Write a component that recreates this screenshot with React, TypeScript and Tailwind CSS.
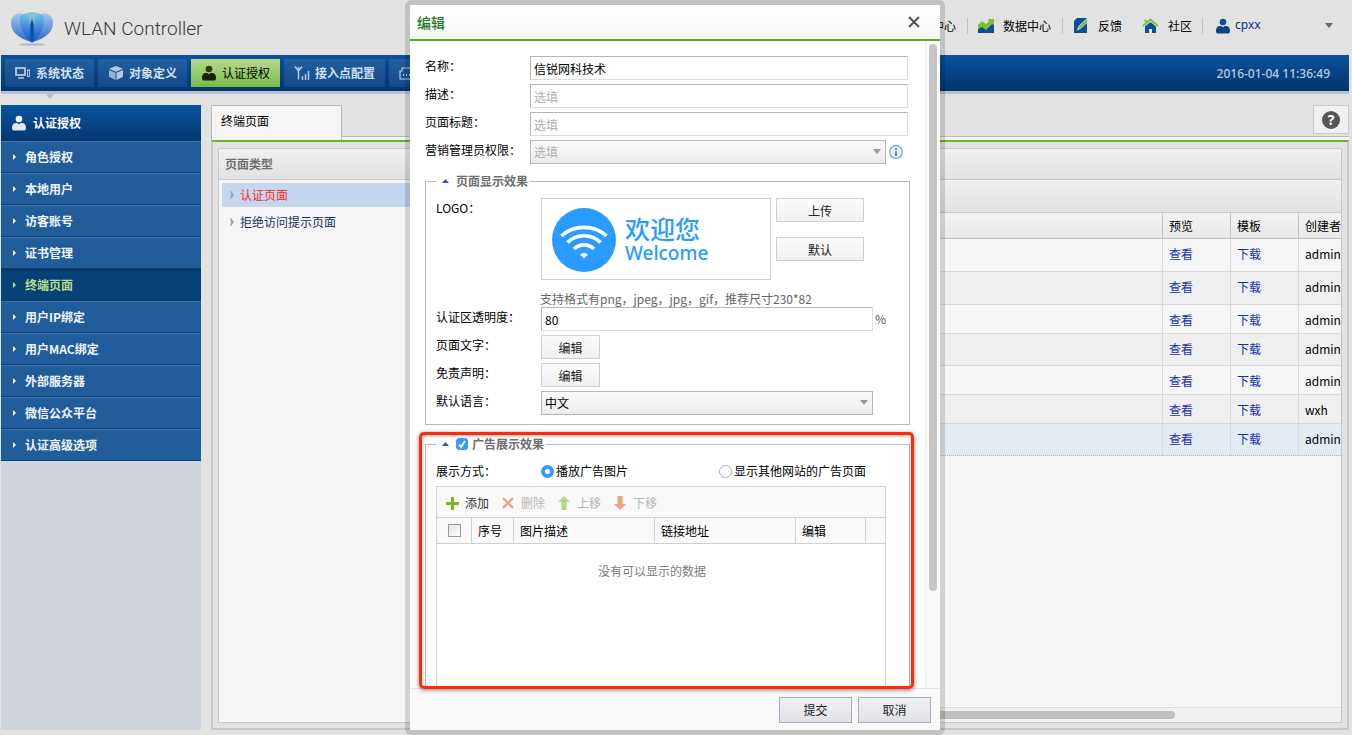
import { useState, type ReactNode } from "react"

const menuItems = [
  "角色授权",
  "本地用户",
  "访客账号",
  "证书管理",
  "终端页面",
  "用户IP绑定",
  "用户MAC绑定",
  "外部服务器",
  "微信公众平台",
  "认证高级选项",
]

const templateRows = [
  { creator: "admin", cell: "h-[33px] bg-[#f5f5f5] border-b-[#d9d9d9]" },
  { creator: "admin", cell: "h-[33px] bg-[#efefef] border-b-[#d9d9d9]" },
  { creator: "admin", cell: "h-[29px] bg-[#f5f5f5] border-b-[#d9d9d9]" },
  { creator: "admin", cell: "h-[32px] bg-[#efefef] border-b-[#d9d9d9]" },
  { creator: "admin", cell: "h-[29px] bg-[#f5f5f5] border-b-[#d9d9d9]" },
  { creator: "wxh", cell: "h-[29px] bg-[#efefef] border-b-[#d9d9d9]" },
  { creator: "admin", cell: "h-[32px] bg-[#e2eaf2] border-b-[#a3bcd9] [border-bottom-style:dotted]" },
]

function LogoIcon() {
  return (
    <svg width="44" height="36" viewBox="0 0 44 36" aria-hidden="true">
      <defs>
        <linearGradient id="petalOuter" x1="0" y1="0" x2="0" y2="1">
          <stop offset="0" stopColor="#a9cbe8" />
          <stop offset="1" stopColor="#2468d2" />
        </linearGradient>
        <linearGradient id="petalInner" x1="0" y1="0" x2="0" y2="1">
          <stop offset="0" stopColor="#5fc0e6" />
          <stop offset="1" stopColor="#0c46bd" />
        </linearGradient>
      </defs>
      <ellipse cx="22" cy="33.500" rx="13" ry="1.300" fill="#b9b9d6" />
      <path d="M22 31.500C12 28 1 23 1 12 1 5 6 2 11 2c7 5 11 16 11 29z" fill="url(#petalOuter)" />
      <path d="M22 31.500C32 28 43 23 43 12 43 5 38 2 33 2c-7 5-11 16-11 29z" fill="url(#petalOuter)" />
      <path d="M10 6C14-.5 30-.5 34 6L22 20z" fill="#86bede" />
      <path d="M22 31.500C14 25 10 17 10 9c0-4 2-6 5-6 5 3 8 13 7 28z" fill="url(#petalInner)" opacity="0.8" />
      <path d="M22 31.500C30 25 34 17 34 9c0-4-2-6-5-6-5 3-8 13-7 28z" fill="url(#petalInner)" opacity="0.8" />
      <path d="M22 31.500c-2.500-8-2.500-17 0-24 2.500 7 2.500 16 0 24z" fill="#0a4fae" />
    </svg>
  )
}

function UserIcon({ top, body, size = 16 }: { top: string; body: string; size?: number }) {
  return (
    <svg width={size} height={size} viewBox="0 0 16 16" aria-hidden="true">
      <path d="M5 8h1.500l1.500 1.500 1.500-1.500H11c2.500 0 4 2 4 4.500 0 2-.5 3-1.500 3h-11C1.500 15.500 1 14.500 1 12.500 1 10 2.500 8 5 8z" fill={body} />
      <circle cx="8" cy="4" r="3.300" fill={top} />
    </svg>
  )
}

function MonitorIcon() {
  return (
    <svg width="16" height="14" viewBox="0 0 16 14" fill="none" stroke="#b5c9df" aria-hidden="true">
      <rect x="1" y="2" width="9" height="7" strokeWidth="1.800" />
      <path d="M3 12h6" strokeWidth="1.500" />
      <rect x="12.500" y="4" width="2" height="6.500" strokeWidth="1" />
    </svg>
  )
}

function CubeIcon() {
  return (
    <svg width="16" height="16" viewBox="0 0 16 16" fill="#b5c9df" aria-hidden="true">
      <path d="M8 1l7 2.700-7 3-7-3z" />
      <path d="M1 5l6.500 2.700V15L1 11.800z" opacity="0.8" />
      <path d="M15 5L8.500 7.700V15l6.500-3.200z" />
    </svg>
  )
}

function AntennaIcon() {
  return (
    <svg width="16" height="16" viewBox="0 0 16 16" fill="none" stroke="#b5c9df" strokeWidth="1.500" aria-hidden="true">
      <path d="M4.500 2v12.500M1 1.500l3.500 4.500L8 1.500" />
      <path d="M8.500 11v4M11.500 9v6M14.500 6v9" />
    </svg>
  )
}

function CaseIcon() {
  return (
    <svg width="16" height="14" viewBox="0 0 16 14" fill="none" stroke="#b5c9df" strokeWidth="1.200" aria-hidden="true">
      <path d="M1 5h2V2h10v3h2v8H1z" />
      <path d="M4 9h1M7 9h1M10 9h1" strokeWidth="2" />
    </svg>
  )
}

function ChartIcon() {
  return (
    <svg width="17" height="16" viewBox="0 0 17 16" aria-hidden="true">
      <path d="M0 11l4-3 4 3 8-7v11H0z" fill="#0d4f97" />
      <path d="M0 11V7l4-4 4 3 3-3-1-2h6v6l-2-1-6 6-4-3z" fill="#7cc02f" />
    </svg>
  )
}

function NoteIcon() {
  return (
    <svg width="16" height="17" viewBox="0 0 16 17" aria-hidden="true">
      <path d="M4 1h10v15H1V4z" fill="#0d4f97" />
      <path d="M14.500 1L6 9l-1.500 4L8 11l6.500-6z" fill="#7cc02f" stroke="#e2e2e2" strokeWidth="0.800" />
    </svg>
  )
}

function HouseIcon() {
  return (
    <svg width="17" height="16" viewBox="0 0 17 16" aria-hidden="true">
      <path d="M3 8.500L8.500 4 14 8.500V15h-4v-4H7v4H3z" fill="#0d4f97" />
      <path d="M1 8l7.500-6.500L16 8M3.500 4V1.500" fill="none" stroke="#7cc02f" strokeWidth="1.800" />
    </svg>
  )
}

function WifiLogo() {
  return (
    <svg width="64" height="64" viewBox="0 0 64 64" fill="none" stroke="#fff" strokeWidth="3.600" aria-hidden="true">
      <circle cx="32" cy="32" r="32" fill="#2b9cff" stroke="none" />
      <path d="M9.500 28C22 16.500 42 16.500 54.500 28" />
      <path d="M15.500 34.500C24.500 25.500 39.500 25.500 48.500 34.500" />
      <path d="M22 41C28 35.500 36 35.500 42 41" />
      <path d="M28 46.500q4-3 8 0L32 50.500z" fill="#fff" stroke="none" />
    </svg>
  )
}

function Caret({ className }: { className: string }) {
  return (
    <svg width="8" height="5" viewBox="0 0 8 5" className={className} aria-hidden="true">
      <path d="M0 0h8L4 5z" fill="currentColor" />
    </svg>
  )
}

function Separator() {
  return <span className="h-4 w-px bg-[#b4c3d1]" />
}

function Field({ label, htmlFor, children }: { label: string; htmlFor?: string; children: ReactNode }) {
  return (
    <div className="mb-1 flex min-h-6">
      <label htmlFor={htmlFor} className="w-[105px] shrink-0 pt-px leading-[18px]">
        {label}
      </label>
      {children}
    </div>
  )
}

function TextInput({ id, value, placeholder }: { id: string; value?: string; placeholder?: string }) {
  return (
    <input
      id={id}
      type="text"
      defaultValue={value}
      placeholder={placeholder}
      className="mr-0.5 h-6 min-w-0 grow border border-[#dedede] border-t-[#b5b5b5] border-l-[#b5b5b5] bg-white px-[3px] text-xs outline-none placeholder:text-[#b0b0b0]"
    />
  )
}

function SelectBox({ id, option, muted = false }: { id: string; option: string; muted?: boolean }) {
  return (
    <div className="relative h-6 grow">
      <select
        id={id}
        className={
          "h-6 w-full appearance-none border border-[#b5b5b5] bg-linear-to-b from-[#fafafa] to-[#ececec] px-[3px] text-xs outline-none " +
          (muted ? "text-[#b0b0b0]" : "text-black")
        }
      >
        <option>{option}</option>
      </select>
      <Caret className="pointer-events-none absolute top-[9px] right-[5px] h-[5px] w-2 text-[#999]" />
    </div>
  )
}

function PlainButton({ children, className }: { children: ReactNode; className: string }) {
  return (
    <button
      type="button"
      className={"h-6 border border-[#d0d0d0] bg-linear-to-b from-[#fbfbfb] to-[#f0f0f0] pt-0.5 text-xs leading-5 text-[#222] " + className}
    >
      {children}
    </button>
  )
}

function TopBar() {
  return (
    <header className="flex h-[55px] items-center justify-between pl-2.5">
      <div className="flex items-center gap-2.5 pt-0.5">
        <LogoIcon />
        <h1 className="font-['Roboto','Liberation_Sans',sans-serif] text-[19px] font-light text-[#3a3a3a]">WLAN Controller</h1>
      </div>
      <nav className="flex items-center pr-[19px] pb-1 leading-4">
        <a href="#center" className="mr-[11px]">中心</a>
        <Separator />
        <a href="#data" className="mr-[11px] ml-2.5 flex items-center gap-2">
          <ChartIcon />
          数据中心
        </a>
        <Separator />
        <a href="#feedback" className="ml-2.5 flex items-center gap-[9px]">
          <NoteIcon />
          反馈
        </a>
        <a href="#community" className="mr-2.5 ml-5 flex items-center gap-[9px]">
          <HouseIcon />
          社区
        </a>
        <Separator />
        <button type="button" className="ml-3 flex items-center gap-1 text-[#0a2c8c]">
          <UserIcon top="#0d4f97" body="#0b4587" />
          <span className="w-[86px] pb-0.5 text-left font-['Noto_Sans',sans-serif]">cpxx</span>
          <Caret className="text-[#666]" />
        </button>
      </nav>
    </header>
  )
}

function NavBar() {
  const tab = "flex h-7 items-center gap-[5px] bg-linear-to-b from-[#21609f] to-[#11488a] px-2.5 font-bold text-[#d5e2ef]"

  return (
    <nav className="relative mr-[3px] ml-px flex h-[39px] items-start gap-1 border-b-[3px] border-[#b5c2d0] bg-linear-to-b from-[#0a52a0] to-[#04346d] px-1 pt-1 whitespace-nowrap">
      <a href="#status" className={tab}>
        <MonitorIcon />
        系统状态
      </a>
      <a href="#objects" className={tab}>
        <CubeIcon />
        对象定义
      </a>
      <a href="#auth" className="flex h-7 items-center gap-[5px] bg-linear-to-b from-[#b7d98b] to-[#78bd47] px-2.5 text-black">
        <UserIcon top="#2b3a1c" body="#151f0c" />
        认证授权
      </a>
      <a href="#access-points" className={tab}>
        <AntennaIcon />
        接入点配置
      </a>
      <a href="#maintenance" aria-label="系统维护" className={tab + " w-[90px]"}>
        <CaseIcon />
      </a>
      <time className="mt-1.5 mr-[15px] ml-auto font-['Noto_Sans',sans-serif] leading-[18px] font-medium text-[#b9cbe0]">
        2016-01-04 11:36:49
      </time>
      <Caret className="absolute top-[39px] left-[45px] text-[#b5c2d0]" />
    </nav>
  )
}

function Sidebar() {
  return (
    <aside className="w-[200px] shrink-0 bg-[#d0d4dc]">
      <h2 className="flex h-9 items-center gap-1.5 bg-linear-to-b from-[#0a53a2] to-[#04376f] pl-2.5 font-bold text-white">
        <UserIcon top="#fff" body="#dfe5ee" />
        认证授权
      </h2>
      <ul>
        {menuItems.map((item) => {
          const active = item === "终端页面"
          return (
            <li key={item}>
              <a
                href="#menu"
                className={
                  "flex h-8 items-center gap-[9px] border-t border-b border-b-[#0c3f74] pl-3 font-bold " +
                  (active ? "border-t-[#08345e] bg-[#064276] text-[#b9dc8c]" : "border-t-[#3c73ab] bg-[#215d9b] text-[#f0f5fa]")
                }
              >
                <svg width="3" height="6" viewBox="0 0 3 6" aria-hidden="true">
                  <path d="M0 0l3 3-3 3z" fill="currentColor" />
                </svg>
                {item}
              </a>
            </li>
          )
        })}
      </ul>
    </aside>
  )
}

function TreeItem({ label, selected = false }: { label: string; selected?: boolean }) {
  return (
    <a
      href="#type"
      className={"flex h-6 items-center gap-1.5 pl-2 " + (selected ? "bg-[#c3d7ef] text-[#ff2a1a]" : "text-[#1d2f5c]")}
    >
      <svg width="4" height="8" viewBox="0 0 4 8" aria-hidden="true">
        <path d="M0 0h1l3 4-3 4H0l1-4z" fill="#8fa9c4" />
      </svg>
      {label}
    </a>
  )
}

function MainPanel() {
  const bar = "border-b border-[#c8c8c8] bg-linear-to-b from-[#f0f0f0] to-[#e2e2e2]"
  const cell = "border-b border-l px-1.5 pt-1.5 align-top leading-[18px] whitespace-nowrap border-l-[#d9d9d9] "
  const head = "h-[26px] overflow-hidden border-b border-l border-[#c4c4c4] px-1.5 py-0 text-left font-normal whitespace-nowrap"

  return (
    <main className="flex min-w-0 grow flex-col">
      <div className="flex h-[35px] bg-linear-to-b from-[#e2e2e2] from-90% to-[#f5f5f5] to-90%">
        <a href="#tab" className="w-[131px] border border-b-0 border-[#b9b9b9] bg-[#f5f5f5] pt-[7px] pl-[9px] leading-4">
          终端页面
        </a>
        <div className="flex h-8 grow justify-end border-b border-[#b9b9b9]">
          <button
            type="button"
            aria-label="帮助"
            className="flex h-[29px] w-9 items-center justify-center border border-[#cbcbcb] bg-[#f0f0f0]"
          >
            <span className="size-[18px] rounded-full bg-[#555] text-center font-['Noto_Sans',sans-serif] text-sm leading-[18px] font-bold text-white">
              ?
            </span>
          </button>
        </div>
      </div>
      <div className="flex min-h-0 grow gap-1.5 border-2 border-[#c8c8c8] border-t-[#6ab42d] p-[5px] pt-1.5">
        <section className="w-[240px] shrink-0 border border-[#c8c8c8] bg-[#f5f5f5]">
          <h3 className={bar + " h-[31px] pt-1.5 pl-1.5 leading-[18px] font-bold text-[#6f6f6f]"}>页面类型</h3>
          <div className="flex flex-col gap-[3px] p-[3px]">
            <TreeItem label="认证页面" selected />
            <TreeItem label="拒绝访问提示页面" />
          </div>
        </section>
        <section className="flex min-w-0 grow flex-col overflow-hidden border border-[#c8c8c8] bg-[#f5f5f5]">
          <div className={bar + " h-[31px] shrink-0"} />
          <div className={bar + " h-[33px] shrink-0"} />
          <table className="w-full table-fixed border-separate border-spacing-0">
            <colgroup>
              <col />
              <col className="w-[68px]" />
              <col className="w-[68px]" />
              <col className="w-[43px]" />
            </colgroup>
            <thead className="bg-linear-to-b from-[#f2f2f2] to-[#e9e9e9]">
              <tr>
                <th className={head} />
                <th className={head}>预览</th>
                <th className={head}>模板</th>
                <th className={head + " pr-0"}>创建者</th>
              </tr>
            </thead>
            <tbody>
              {templateRows.map((row, i) => (
                <tr key={i}>
                  <td className={cell + row.cell} />
                  <td className={cell + row.cell}>
                    <a href="#view" className="text-[#1a2fae]">查看</a>
                  </td>
                  <td className={cell + row.cell}>
                    <a href="#download" className="text-[#1a2fae]">下载</a>
                  </td>
                  <td className={cell + row.cell + " pr-0"}>{row.creator}</td>
                </tr>
              ))}
            </tbody>
          </table>
          <div className="mt-auto h-[15px] border-t border-[#dcdcdc] bg-[#f0f0f0] pt-[3px]">
            <div className="h-2 w-[81%] rounded-full bg-[#bfbfbf]" />
          </div>
        </section>
      </div>
    </main>
  )
}

function Legend({ children }: { children: ReactNode }) {
  return (
    <legend className="flex h-[18px] items-center pr-0.5 pl-1.5 leading-[18px] font-bold text-[#6f6f6f]">
      <svg width="7" height="4" viewBox="0 0 7 4" className="mr-[7px]" aria-hidden="true">
        <path d="M3.500 0L7 4H0z" fill="#3056b4" />
      </svg>
      {children}
    </legend>
  )
}

function AdGrid() {
  const tool = "flex items-center gap-[7px] text-[#b5b5b5]"
  const head = "h-[26px] border-b border-l border-[#d0d0d0] px-1.5 py-0 text-left font-normal"

  return (
    <div className="mr-[13px] h-[300px] border border-[#d0d0d0] bg-white">
      <div className="flex h-[31px] items-center gap-[13px] border-b border-[#d0d0d0] bg-[#f9f9f9] pt-0.5 pl-[9px]">
        <button type="button" className="flex items-center gap-1.5 text-[#333]">
          <svg width="13" height="13" viewBox="0 0 13 13" aria-hidden="true">
            <path d="M5 0h3v5h5v3H8v5H5V8H0V5h5z" fill="#78b81c" />
          </svg>
          添加
        </button>
        <button type="button" className={tool}>
          <svg width="12" height="12" viewBox="0 0 12 12" aria-hidden="true">
            <path d="M1 1l10 10M11 1L1 11" stroke="#f29a7b" strokeWidth="2.200" />
          </svg>
          删除
        </button>
        <button type="button" className={tool}>
          <svg width="12" height="14" viewBox="0 0 12 14" aria-hidden="true">
            <path d="M6 0l6 6H8.500v8h-5V6H0z" fill="#a9db85" />
          </svg>
          上移
        </button>
        <button type="button" className={tool}>
          <svg width="12" height="14" viewBox="0 0 12 14" aria-hidden="true">
            <path d="M6 14l6-6H8.500V0h-5v8H0z" fill="#f5a07c" />
          </svg>
          下移
        </button>
      </div>
      <table className="w-full table-fixed border-separate border-spacing-0">
        <colgroup>
          <col className="w-[34px]" />
          <col className="w-[42px]" />
          <col className="w-[141px]" />
          <col className="w-[141px]" />
          <col className="w-[70px]" />
          <col />
        </colgroup>
        <thead className="bg-[#f9f9f9]">
          <tr>
            <th className="h-[26px] border-b border-[#d0d0d0] p-0">
              <input
                type="checkbox"
                aria-label="全选"
                className="mx-auto block size-[13px] appearance-none border border-[#999] bg-linear-to-br from-[#e4e4e0] to-white"
              />
            </th>
            <th className={head}>序号</th>
            <th className={head}>图片描述</th>
            <th className={head}>链接地址</th>
            <th className={head}>编辑</th>
            <th className={head} />
          </tr>
        </thead>
        <tbody>
          <tr>
            <td colSpan={6} className="pt-[18px] pr-[18px] text-center leading-[18px] text-[#808080]">
              没有可以显示的数据
            </td>
          </tr>
        </tbody>
      </table>
    </div>
  )
}

function EditDialog() {
  const [mode, setMode] = useState("images")
  const radio =
    "size-[13px] appearance-none rounded-full border border-[#aaa] bg-white checked:border-[4px] checked:border-[#3b99f7]"
  const footerButton =
    "h-[26px] w-[73px] border border-[#a7abbb] bg-linear-to-b from-[#f1f2f5] to-[#e0e2e8] text-xs leading-5 text-[#222]"

  return (
    <div
      role="dialog"
      aria-label="编辑"
      className="relative flex h-full w-[540px] flex-col rounded-md border-[5px] border-black/14 bg-white bg-clip-padding"
    >
      <div className="flex h-9 shrink-0 items-center justify-between border-b-2 border-[#5ba725] bg-linear-to-b from-white to-[#f7f7f7] pr-5 pl-[7px]">
        <h2 className="text-sm font-medium text-[#1d7a22]">编辑</h2>
        <button type="button" aria-label="关闭">
          <svg width="12" height="12" viewBox="0 0 12 12" aria-hidden="true">
            <path d="M1 1l10 10M11 1L1 11" stroke="#555" strokeWidth="2" />
          </svg>
        </button>
      </div>

      <div className="flex min-h-0 grow">
        <form className="min-w-0 grow overflow-hidden px-[15px] pt-[15px]">
          <Field label="名称：" htmlFor="name">
            <TextInput id="name" value="信锐网科技术" />
          </Field>
          <Field label="描述：" htmlFor="description">
            <TextInput id="description" placeholder="选填" />
          </Field>
          <Field label="页面标题：" htmlFor="page-title">
            <TextInput id="page-title" placeholder="选填" />
          </Field>
          <Field label="营销管理员权限：" htmlFor="permission">
            <SelectBox id="permission" option="选填" muted />
            <svg width="14" height="14" viewBox="0 0 14 14" className="mt-[5px] mr-[7px] ml-[3px]" aria-hidden="true">
              <circle cx="7" cy="7" r="6.300" fill="#eaf3fc" stroke="#7f9fc6" strokeWidth="1.200" />
              <path d="M7 3v2M7 6v5" stroke="#4f7db8" strokeWidth="1.800" />
            </svg>
          </Field>

          <fieldset className="mt-2 border border-[#b8bac8] px-2.5 pb-[5px]">
            <Legend>页面显示效果</Legend>
            <div className="mt-2 flex">
              <span className="w-[105px] shrink-0 pt-px leading-[18px]">LOGO：</span>
              <div className="flex h-[82px] w-[230px] items-center gap-[9px] border border-[#d0d0d0] pt-0.5 pl-2.5 text-[#2b9cff]">
                <WifiLogo />
                <div>
                  <p className="text-[25px] leading-[26px] font-medium">欢迎您</p>
                  <p className="font-['Noto_Sans',sans-serif] text-[19px] leading-6 font-medium">Welcome</p>
                </div>
              </div>
              <div className="ml-[5px] flex flex-col gap-[15px]">
                <PlainButton className="w-[88px]">上传</PlainButton>
                <PlainButton className="w-[88px]">默认</PlainButton>
              </div>
            </div>
            <p className="h-[27px] pt-2.5 pl-[104px] leading-[18px] text-[#666]">支持格式有png，jpeg，jpg，gif，推荐尺寸230*82</p>
            <Field label="认证区透明度：" htmlFor="opacity">
              <TextInput id="opacity" value="80" />
              <span className="w-6 pt-[3px] leading-[18px] text-[#555]">%</span>
            </Field>
            <Field label="页面文字：">
              <PlainButton className="w-[59px]">编辑</PlainButton>
            </Field>
            <Field label="免责声明：">
              <PlainButton className="w-[59px]">编辑</PlainButton>
            </Field>
            <Field label="默认语言：" htmlFor="language">
              <SelectBox id="language" option="中文" />
              <span className="w-[26px]" />
            </Field>
          </fieldset>

          <fieldset className="mt-2.5 border border-[#b8bac8] px-2.5 pb-1">
            <Legend>
              <label className="flex items-center gap-1">
                <span className="relative flex">
                  <input
                    type="checkbox"
                    defaultChecked
                    className="peer size-3 appearance-none rounded-[3px] border border-[#aaa] checked:border-[#3b99f7] checked:bg-[#3b99f7]"
                  />
                  <svg
                    width="12"
                    height="12"
                    viewBox="0 0 12 12"
                    className="pointer-events-none absolute hidden peer-checked:block"
                    aria-hidden="true"
                  >
                    <path d="M3 6.500l2 2.500 4-6" fill="none" stroke="#fff" strokeWidth="1.700" />
                  </svg>
                </span>
                广告展示效果
              </label>
            </Legend>
            <div className="mt-[9px] mb-1.5 flex leading-[18px]" role="radiogroup" aria-label="展示方式">
              <span className="w-[105px]">展示方式：</span>
              <label className="flex w-[178px] items-center gap-0.5">
                <input type="radio" name="mode" className={radio} checked={mode === "images"} onChange={() => setMode("images")} />
                播放广告图片
              </label>
              <label className="flex items-center gap-0.5">
                <input type="radio" name="mode" className={radio} checked={mode === "site"} onChange={() => setMode("site")} />
                显示其他网站的广告页面
              </label>
            </div>
            <AdGrid />
          </fieldset>
        </form>
        {/* Scrollbar */}
        <div className="w-[15px] shrink-0 border-l border-[#ececec] bg-[#fafafa] pt-[3px] pl-[3px]">
          <div className="h-[85%] w-2 rounded-full bg-[#c6c6c6]" />
        </div>
      </div>

      <div className="flex h-[42px] shrink-0 justify-end gap-1.5 border-t border-[#e6e6e6] bg-[#f9f9f9] pt-2 pr-[9px]">
        <button type="button" className={footerButton}>提交</button>
        <button type="button" className={footerButton}>取消</button>
      </div>

      {/* Highlight around the ad settings */}
      <div className="pointer-events-none absolute top-[427px] right-[26px] bottom-[41px] left-[9px] rounded-[5px] border-[3px] border-[#ff2a0a] shadow-[0_1px_4px_rgba(0,0,0,0.5),inset_0_1px_3px_rgba(0,0,0,0.35)]" />
    </div>
  )
}

export default function App() {
  return (
    <div className="relative flex h-screen flex-col overflow-hidden bg-[#e2e2e2] font-['Noto_Sans_CJK_SC',sans-serif] text-xs text-black">
      <TopBar />
      <NavBar />
      <div className="flex min-h-0 grow gap-2.5 pt-[11px] pr-[3px] pb-[5px] pl-px">
        <Sidebar />
        <MainPanel />
      </div>
      <div className="absolute inset-0 flex justify-center pr-0.5">
        <EditDialog />
      </div>
    </div>
  )
}
